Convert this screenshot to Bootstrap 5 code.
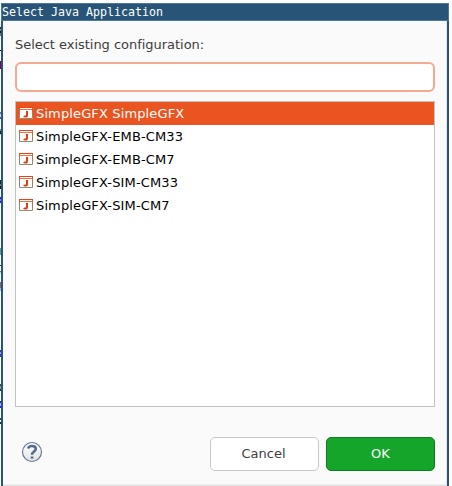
<!DOCTYPE html>
<html lang="en">
<head>
<meta charset="utf-8">
<title>Select Java Application</title>
<link href="https://cdn.jsdelivr.net/npm/bootstrap@5.3.0/dist/css/bootstrap.min.css" rel="stylesheet">
<style>
body{font:13px/23px "DejaVu Sans",sans-serif;background:#fff;overflow:hidden;height:486px;color:#000}
/* sliver of the editor text behind the window */
.editor-edge{width:1px;flex:none;background:linear-gradient(#fff 27px,#333 27px 29px,#888 29px 31px,#111 31px 33px,#777 33px 36px,#fff 36px 50px,#000 50px 51px,#fff 51px 61px,#7f0055 61px 69px,#fff 69px 112px,#6a6ae0 112px 114px,#dde 114px 117px,#4a4ae0 117px 119px,#fff 119px 129px,#888 129px 131px,#222 131px 134px,#bbb 134px 135px,#fff 135px 180px,#222 180px 184px,#777 184px 186px,#111 186px 189px,#fff 189px 197px,#22c 197px 199px,#88e 199px 201px,#22c 201px 203px,#fff 203px 248px,#6a9a83 248px 255px,#fff 255px 265px,#333 265px 266px,#fff 266px 271px,#678 271px 272px,#bdf 272px 274px,#fff 274px 282px,#866 282px 288px,#9bd 288px 291px,#fff 291px 350px,#33d 350px 352px,#99e 352px 354px,#33d 354px 357px,#fff 357px 384px,#444 384px 386px,#999 386px 389px,#333 389px 391px,#fff 391px 401px,#22e 401px 403px,#aae 403px 406px,#22e 406px 408px,#fff 408px 418px,#444 418px 420px,#fff 420px 422px,#222 422px 424px,#fff 424px)}
.window{width:448px;height:483px;margin-top:3px;flex:none}
.titlebar{height:18px;background:#285577;border:1px solid #4c7899;color:#fff;font:11.63px/17px "DejaVu Sans Mono",monospace;white-space:pre;flex:none}
.pane{background:#fafafa;border-left:2px solid #285577;border-right:2px solid #285577;padding:11px 12px 0;box-shadow:inset -1px 0 #e6e6e6}
.prompt{color:#3d3d3d;height:30px;line-height:25px;letter-spacing:-.03px}
.filter{height:30px;border:2px solid #f4aa90;border-radius:6px;background:#fff;padding:0 6px}
.filter:focus{border-color:#f4aa90;box-shadow:none}
.configs{height:306px;margin-top:9px;border:1px solid #c3c3c3;background:#fff;border-radius:0;flex:none}
.configs .list-group-item{height:23px;padding:0 0 0 3px;border:0;gap:3px;color:#000;background:#fff;letter-spacing:.13px}
.configs .list-group-item.active{background:#e95420;color:#fff;margin-top:0}
.configs svg{margin-bottom:1px}
.btn.action{width:109px;height:34px;padding:0 2px 0 0;border-radius:5px;font-size:13px;line-height:32px;border:1px solid #c7c7c7;background:#fff;color:#3d3d3d}
.btn.accept{background:#14a52a;border-color:#0f7c20;color:#fff;margin-left:7px;padding:0}
.footer-row{margin-top:30px;padding-left:6px}
.bottom-edge{height:2px;margin:13px -12px 0;background:linear-gradient(#f0f0f0 50%,#dedede 50%)}
.help{width:22px;height:22px;margin-top:-4px}
</style>
</head>
<body class="d-flex align-items-stretch">
<svg class="position-absolute" width="0" height="0">
<defs>
<linearGradient id="frame" x2="0" y2="1"><stop stop-color="#bc6a39"/><stop offset="1" stop-color="#8e8d78"/></linearGradient>
<linearGradient id="disc" x2="0" y2="1"><stop stop-color="#fff"/><stop offset="1" stop-color="#e2e2e2"/></linearGradient>
</defs>
<symbol id="java" viewBox="0 0 14 12"><path fill="#fff" d="M0 0h14v12H0z"/><path fill="none" stroke="url(#frame)" d="M.5.5h13v11H.5z"/><path fill="#e6431c" d="M0 0h14v1H0z"/><path fill="#f66b43" d="M1 2h12v1H1z"/><path fill="none" stroke="#dc3b16" stroke-width="2" d="M8 4v4c0 1.300-.8 1.600-1.600 1.600-.7 0-1.300-.2-1.600-.5"/></symbol>
</svg>
<div class="editor-edge"></div>
<main class="window d-flex flex-column">
<header class="titlebar">Select Java Application</header>
<section class="pane flex-grow-1 d-flex flex-column">
<label class="prompt" for="filter">Select existing configuration:</label>
<input class="filter form-control" id="filter" type="text">
<div class="configs list-group">
<div class="list-group-item active d-flex align-items-center"><svg width="14" height="12"><use href="#java"/></svg>SimpleGFX SimpleGFX</div>
<div class="list-group-item d-flex align-items-center"><svg width="14" height="12"><use href="#java"/></svg>SimpleGFX-EMB-CM33</div>
<div class="list-group-item d-flex align-items-center"><svg width="14" height="12"><use href="#java"/></svg>SimpleGFX-EMB-CM7</div>
<div class="list-group-item d-flex align-items-center"><svg width="14" height="12"><use href="#java"/></svg>SimpleGFX-SIM-CM33</div>
<div class="list-group-item d-flex align-items-center"><svg width="14" height="12"><use href="#java"/></svg>SimpleGFX-SIM-CM7</div>
</div>
<div class="footer-row d-flex align-items-center">
<svg class="help me-auto" viewBox="0 0 22 22"><circle cx="11" cy="11" r="9.500" fill="url(#disc)" stroke="#5d7290" stroke-width="1.100"/><path fill="none" stroke="#536a8d" stroke-width="2.600" d="M7.200 7.500C7.600 5.700 9 5 11 5c2.300 0 3.800 1.100 3.800 2.800 0 2.900-3.700 2.600-3.700 6"/><path fill="#536a8d" d="M9.700 15.500h2.700v2.100H9.700z"/></svg>
<button class="btn action" type="button">Cancel</button>
<button class="btn action accept" type="button">OK</button>
</div>
<div class="bottom-edge"></div>
</section>
</main>
<script src="https://cdn.jsdelivr.net/npm/bootstrap@5.3.0/dist/js/bootstrap.bundle.min.js"></script>
</body>
</html>
